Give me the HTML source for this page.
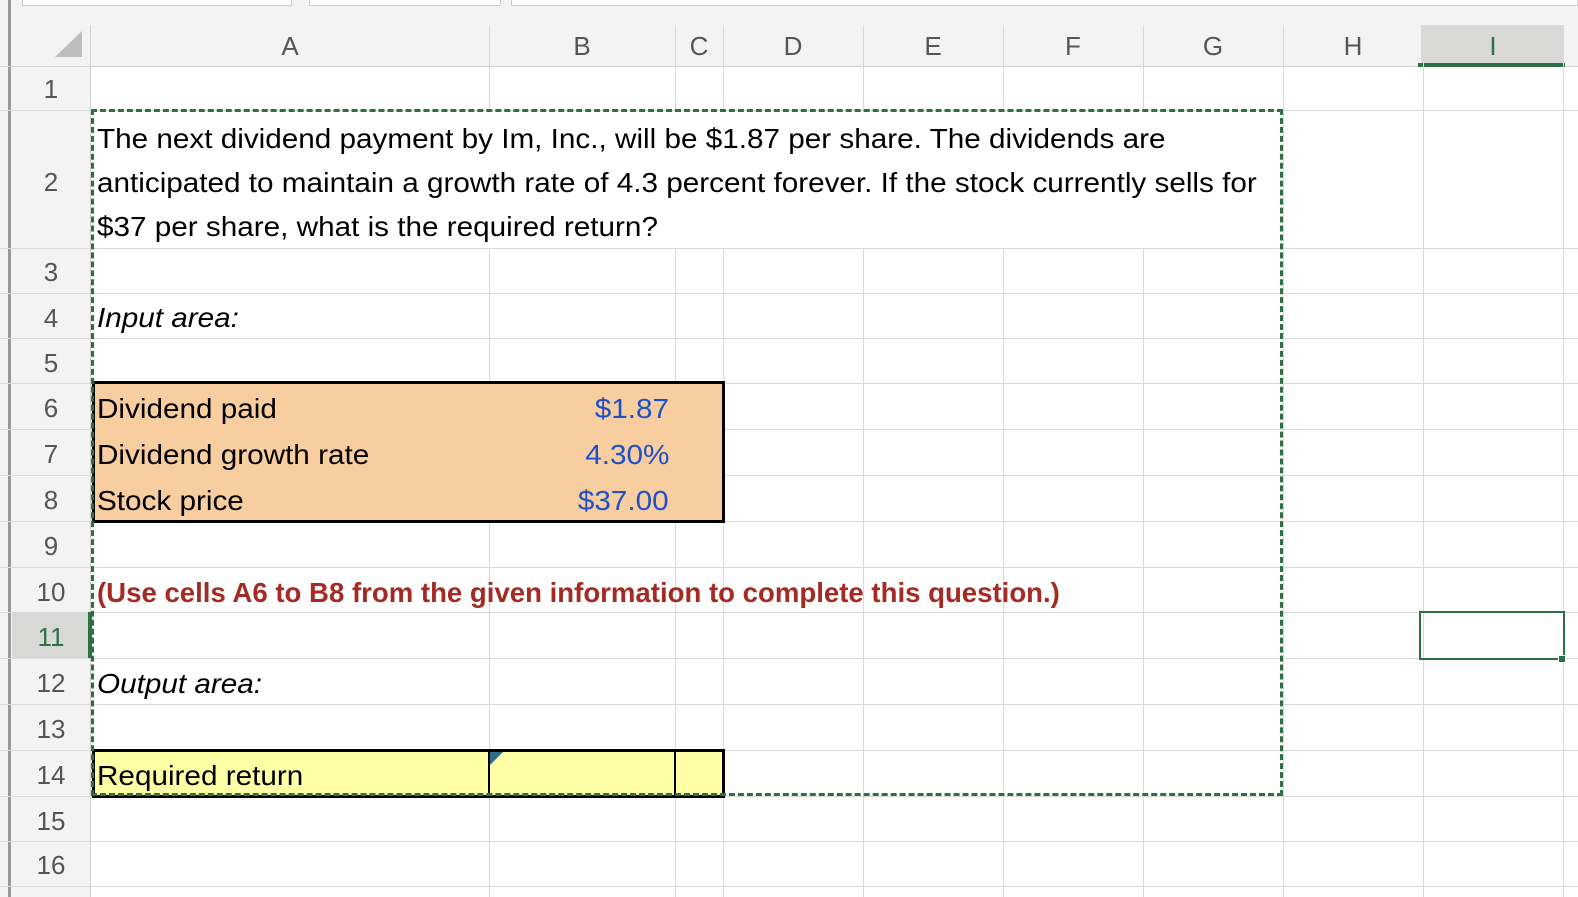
<!DOCTYPE html>
<html><head><meta charset="utf-8"><style>
*{margin:0;padding:0;box-sizing:border-box}
body{width:1578px;height:897px;overflow:hidden;background:#fff;position:relative;font-family:"Liberation Sans",sans-serif}
.a{position:absolute}
.hl{position:absolute;height:1px;background:#d9d9d9}
.vl{position:absolute;width:1px;background:#d9d9d9}
.ch{position:absolute;top:25px;height:41px;font-size:26px;color:#555;text-align:center;line-height:42px}
.rh{position:absolute;left:12px;width:78px;font-size:26px;color:#555;text-align:center}
.t{position:absolute;left:97px;font-size:28px;color:#000;white-space:nowrap;transform:scaleX(1.06);transform-origin:left center}
</style></head><body>
<div class="a" style="left:0;top:0;width:1578px;height:25px;background:#f3f3f3"></div>
<div class="a" style="left:22px;top:0;width:270px;height:6px;background:#fff;border:1px solid #ccc;border-top:none"></div>
<div class="a" style="left:309px;top:0;width:192px;height:6px;background:#fff;border:1px solid #ccc;border-top:none"></div>
<div class="a" style="left:511px;top:0;width:1067px;height:6px;background:#fff;border:1px solid #ccc;border-top:none"></div>
<div class="a" style="left:0;top:25px;width:1578px;height:41px;background:#f3f3f3"></div>
<div class="a" style="left:0;top:66px;width:91px;height:831px;background:#f3f3f3"></div>
<div class="a" style="left:8px;top:0;width:3px;height:897px;background:#999"></div>
<svg class="a" style="left:55px;top:31px" width="28" height="27"><polygon points="27,0 27,26 0,26" fill="#bdbdbd"/></svg>
<div class="hl" style="left:0;top:66px;width:1578px;background:#d0d0d0"></div>
<div class="vl" style="left:90px;top:25px;height:872px;background:#d0d0d0"></div>
<div class="a" style="left:1421px;top:25px;width:142px;height:41px;background:#d8d8d6"></div>
<div class="a" style="left:1418px;top:63px;width:147px;height:4px;background:#2e7044"></div>
<div class="ch" style="left:91px;width:398px">A</div>
<div class="ch" style="left:489px;width:186px">B</div>
<div class="ch" style="left:675px;width:48px">C</div>
<div class="ch" style="left:723px;width:140px">D</div>
<div class="ch" style="left:863px;width:140px">E</div>
<div class="ch" style="left:1003px;width:140px">F</div>
<div class="ch" style="left:1143px;width:140px">G</div>
<div class="ch" style="left:1283px;width:140px">H</div>
<div class="ch" style="left:1423px;width:140px;color:#2e7044">I</div>
<div class="vl" style="left:489px;top:25px;height:872px"></div>
<div class="vl" style="left:675px;top:25px;height:872px"></div>
<div class="vl" style="left:723px;top:25px;height:872px"></div>
<div class="vl" style="left:863px;top:25px;height:872px"></div>
<div class="vl" style="left:1003px;top:25px;height:872px"></div>
<div class="vl" style="left:1143px;top:25px;height:872px"></div>
<div class="vl" style="left:1283px;top:25px;height:872px"></div>
<div class="vl" style="left:1423px;top:25px;height:872px"></div>
<div class="vl" style="left:1563px;top:25px;height:872px"></div>
<div class="a" style="left:91px;top:111px;width:1192px;height:137px;background:#fff"></div>
<div class="hl" style="left:0;top:110px;width:1578px"></div>
<div class="hl" style="left:0;top:248px;width:1578px"></div>
<div class="hl" style="left:0;top:293px;width:1578px"></div>
<div class="hl" style="left:0;top:338px;width:1578px"></div>
<div class="hl" style="left:0;top:383px;width:1578px"></div>
<div class="hl" style="left:0;top:429px;width:1578px"></div>
<div class="hl" style="left:0;top:475px;width:1578px"></div>
<div class="hl" style="left:0;top:521px;width:1578px"></div>
<div class="hl" style="left:0;top:567px;width:1578px"></div>
<div class="hl" style="left:0;top:612px;width:1578px"></div>
<div class="hl" style="left:0;top:658px;width:1578px"></div>
<div class="hl" style="left:0;top:704px;width:1578px"></div>
<div class="hl" style="left:0;top:750px;width:1578px"></div>
<div class="hl" style="left:0;top:796px;width:1578px"></div>
<div class="hl" style="left:0;top:841px;width:1578px"></div>
<div class="hl" style="left:0;top:886px;width:1578px"></div>
<div class="a" style="left:12px;top:613px;width:78px;height:45px;background:#d8d8d6"></div>
<div class="a" style="left:88px;top:612px;width:4px;height:46px;background:#2e7044"></div>
<div class="rh" style="top:74px">1</div>
<div class="rh" style="top:167px">2</div>
<div class="rh" style="top:257px">3</div>
<div class="rh" style="top:303px">4</div>
<div class="rh" style="top:348px">5</div>
<div class="rh" style="top:393px">6</div>
<div class="rh" style="top:439px">7</div>
<div class="rh" style="top:485px">8</div>
<div class="rh" style="top:531px">9</div>
<div class="rh" style="top:577px">10</div>
<div class="rh" style="top:622px;color:#2e7044">11</div>
<div class="rh" style="top:668px">12</div>
<div class="rh" style="top:714px">13</div>
<div class="rh" style="top:760px">14</div>
<div class="rh" style="top:806px">15</div>
<div class="rh" style="top:850px">16</div>
<div class="a" style="left:92px;top:381px;width:633px;height:142px;background:#f8cda0;border:3px solid #000"></div>
<div class="a" style="left:92px;top:749px;width:633px;height:49px;background:#ffffa6;border:3px solid #000"></div>
<div class="a" style="left:488px;top:750px;width:2px;height:46px;background:#000"></div>
<div class="a" style="left:674px;top:750px;width:2px;height:46px;background:#000"></div>
<svg class="a" style="left:490px;top:752px" width="14" height="14"><polygon points="0,0 13,0 0,13" fill="#2e6e8a"/></svg>
<div class="a" style="left:91px;top:109px;width:1192px;height:687px;border:3px dashed #2e7044"></div>
<div class="a" style="left:1419px;top:611px;width:146px;height:49px;border:2px solid #2e7044"></div>
<div class="a" style="left:1558px;top:655px;width:8px;height:8px;background:#2e7044;border:1px solid #fff"></div>
<div class="t" style="top:123px">The next dividend payment by Im, Inc., will be $1.87 per share. The dividends are</div>
<div class="t" style="top:167px">anticipated to maintain a growth rate of 4.3 percent forever. If the stock currently sells for</div>
<div class="t" style="top:211px">$37 per share, what is the required return?</div>
<div class="t" style="top:302px;font-style:italic">Input area:</div>
<div class="t" style="top:393px">Dividend paid</div>
<div class="t" style="top:439px">Dividend growth rate</div>
<div class="t" style="top:485px">Stock price</div>
<div class="t" style="top:393px;left:auto;right:909px;color:#2050c8;transform-origin:right center">$1.87</div>
<div class="t" style="top:439px;left:auto;right:909px;color:#2050c8;transform-origin:right center">4.30%</div>
<div class="t" style="top:485px;left:auto;right:909px;color:#2050c8;transform-origin:right center">$37.00</div>
<div class="t" style="top:577px;font-weight:bold;color:#a52a24;transform:scaleX(0.985)">(Use cells A6 to B8 from the given information to complete this question.)</div>
<div class="t" style="top:668px;font-style:italic">Output area:</div>
<div class="t" style="top:760px">Required return</div>
</body></html>
